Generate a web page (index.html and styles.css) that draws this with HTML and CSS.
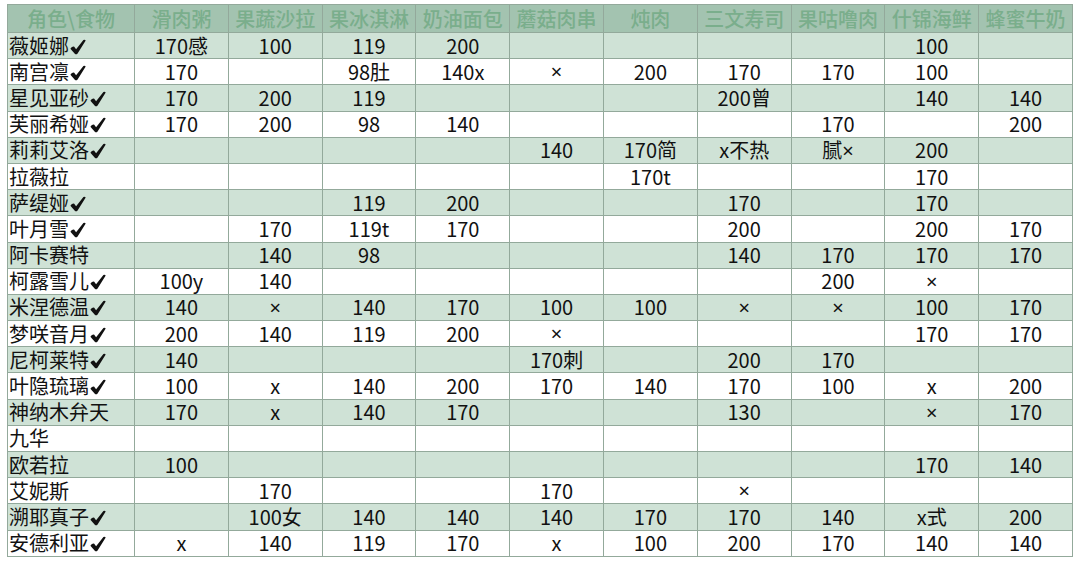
FILE: index.html
```html
<!DOCTYPE html>
<html lang="zh-CN">
<head>
<meta charset="utf-8">
<title>角色食物表</title>
<link rel="stylesheet" href="styles.css">
</head>
<body>
<svg class="defs" width="0" height="0" aria-hidden="true">
  <defs>
    <symbol id="ck" viewBox="0 0 16 16">
      <path d="M0.4 9.8 Q1.8 7.2 4 7.4 L6.1 10.2 L13.4 0.9 Q14.8 0.2 15.7 1.5 L7.6 14.4 Q6.2 16 4.8 14.8 Z" fill="#111"/>
    </symbol>
  </defs>
</svg>
<table class="grid">
<colgroup>
<col class="c-name">
<col><col><col><col><col><col><col><col><col><col>
</colgroup>
<thead>
<tr><th>角色\食物</th><th>滑肉粥</th><th>果蔬沙拉</th><th>果冰淇淋</th><th>奶油面包</th><th>蘑菇肉串</th><th>炖肉</th><th>三文寿司</th><th>果咕噜肉</th><th>什锦海鲜</th><th>蜂蜜牛奶</th></tr>
</thead>
<tbody>
<tr class="g"><td class="name">薇姬娜<svg class="ck"><use href="#ck"/></svg></td><td>170感</td><td>100</td><td>119</td><td>200</td><td></td><td></td><td></td><td></td><td>100</td><td></td></tr>
<tr><td class="name">南宫凛<svg class="ck"><use href="#ck"/></svg></td><td>170</td><td></td><td>98肚</td><td>140x</td><td><span class="m">×</span></td><td>200</td><td>170</td><td>170</td><td>100</td><td></td></tr>
<tr class="g"><td class="name">星见亚砂<svg class="ck"><use href="#ck"/></svg></td><td>170</td><td>200</td><td>119</td><td></td><td></td><td></td><td>200曾</td><td></td><td>140</td><td>140</td></tr>
<tr><td class="name">芙丽希娅<svg class="ck"><use href="#ck"/></svg></td><td>170</td><td>200</td><td>98</td><td>140</td><td></td><td></td><td></td><td>170</td><td></td><td>200</td></tr>
<tr class="g"><td class="name">莉莉艾洛<svg class="ck"><use href="#ck"/></svg></td><td></td><td></td><td></td><td></td><td>140</td><td>170简</td><td>x不热</td><td>腻<span class="m">×</span></td><td>200</td><td></td></tr>
<tr><td class="name">拉薇拉</td><td></td><td></td><td></td><td></td><td></td><td>170t</td><td></td><td></td><td>170</td><td></td></tr>
<tr class="g"><td class="name">萨缇娅<svg class="ck"><use href="#ck"/></svg></td><td></td><td></td><td>119</td><td>200</td><td></td><td></td><td>170</td><td></td><td>170</td><td></td></tr>
<tr><td class="name">叶月雪<svg class="ck"><use href="#ck"/></svg></td><td></td><td>170</td><td>119t</td><td>170</td><td></td><td></td><td>200</td><td></td><td>200</td><td>170</td></tr>
<tr class="g"><td class="name">阿卡赛特</td><td></td><td>140</td><td>98</td><td></td><td></td><td></td><td>140</td><td>170</td><td>170</td><td>170</td></tr>
<tr><td class="name">柯露雪儿<svg class="ck"><use href="#ck"/></svg></td><td>100y</td><td>140</td><td></td><td></td><td></td><td></td><td></td><td>200</td><td><span class="m">×</span></td><td></td></tr>
<tr class="g"><td class="name">米涅德温<svg class="ck"><use href="#ck"/></svg></td><td>140</td><td><span class="m">×</span></td><td>140</td><td>170</td><td>100</td><td>100</td><td><span class="m">×</span></td><td><span class="m">×</span></td><td>100</td><td>170</td></tr>
<tr><td class="name">梦咲音月<svg class="ck"><use href="#ck"/></svg></td><td>200</td><td>140</td><td>119</td><td>200</td><td><span class="m">×</span></td><td></td><td></td><td></td><td>170</td><td>170</td></tr>
<tr class="g"><td class="name">尼柯莱特<svg class="ck"><use href="#ck"/></svg></td><td>140</td><td></td><td></td><td></td><td>170刺</td><td></td><td>200</td><td>170</td><td></td><td></td></tr>
<tr><td class="name">叶隐琉璃<svg class="ck"><use href="#ck"/></svg></td><td>100</td><td>x</td><td>140</td><td>200</td><td>170</td><td>140</td><td>170</td><td>100</td><td>x</td><td>200</td></tr>
<tr class="g"><td class="name">神纳木弁天</td><td>170</td><td>x</td><td>140</td><td>170</td><td></td><td></td><td>130</td><td></td><td><span class="m">×</span></td><td>170</td></tr>
<tr><td class="name">九华</td><td></td><td></td><td></td><td></td><td></td><td></td><td></td><td></td><td></td><td></td></tr>
<tr class="g"><td class="name">欧若拉</td><td>100</td><td></td><td></td><td></td><td></td><td></td><td></td><td></td><td>170</td><td>140</td></tr>
<tr><td class="name">艾妮斯</td><td></td><td>170</td><td></td><td></td><td>170</td><td></td><td><span class="m">×</span></td><td></td><td></td><td></td></tr>
<tr class="g"><td class="name">溯耶真子<svg class="ck"><use href="#ck"/></svg></td><td></td><td>100女</td><td>140</td><td>140</td><td>140</td><td>170</td><td>170</td><td>140</td><td>x式</td><td>200</td></tr>
<tr><td class="name">安德利亚<svg class="ck"><use href="#ck"/></svg></td><td>x</td><td>140</td><td>119</td><td>170</td><td>x</td><td>100</td><td>200</td><td>170</td><td>140</td><td>140</td></tr>
</tbody>
</table>
</body>
</html>
```

FILE: styles.css
```css
html, body {
  margin: 0;
  padding: 0;
  background: #ffffff;
}

body {
  padding: 4px 0 0 7px;
  font-family: "Noto Sans CJK SC", "Noto Sans", sans-serif;
  color: #111111;
}

.defs {
  position: absolute;
  width: 0;
  height: 0;
  overflow: hidden;
}

.grid {
  border-collapse: collapse;
  table-layout: fixed;
  width: 1066px;
  font-size: 20px;
  line-height: 22px;
}

.c-name {
  width: 127px;
}

.grid th,
.grid td {
  border: 1px solid #93a99b;
  padding: 0 2px;
  text-align: center;
  white-space: nowrap;
}

.grid th {
  height: 27px;
  background: #a3c3b0;
  color: #7aae8c;
  font-weight: 500;
}

.grid td {
  height: 25.2px;
}

.grid .name {
  text-align: left;
  padding-left: 1px;
}

.grid tr.g td {
  background: #cfe2d6;
}

.ck {
  width: 16px;
  height: 16px;
  margin-left: 1px;
  vertical-align: -1px;
}

.m {
  font-family: "Noto Sans", "DejaVu Sans", sans-serif;
  font-size: 20px;
}
```
